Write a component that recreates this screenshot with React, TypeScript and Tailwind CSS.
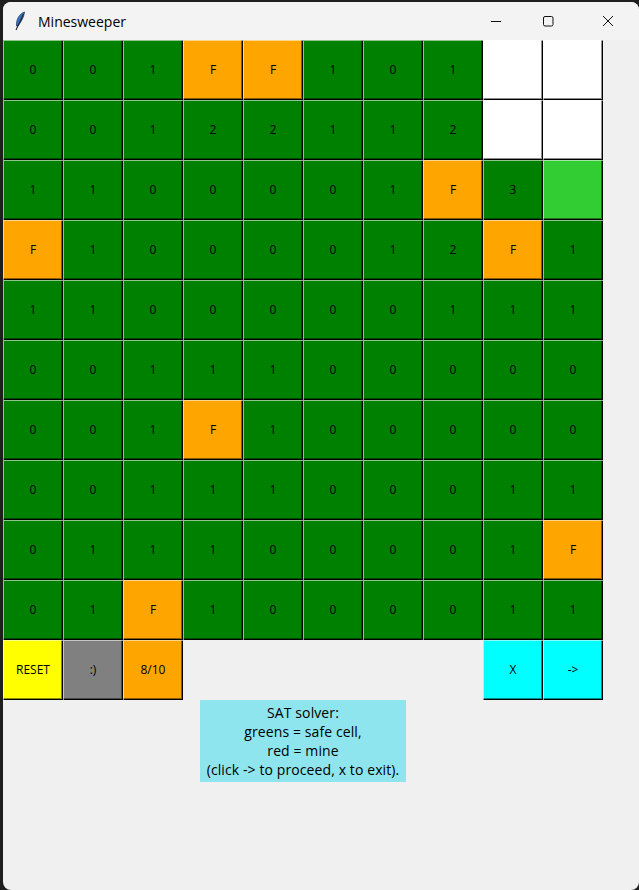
const G = 'bg-[#008000]';
const O = 'bg-[#ffa500]';
const W = 'bg-white';
const L = 'bg-[#32cd32]';

type Cell = { t: string; c: string };

const rows: string[][] = [
  ['0', '0', '1', 'F', 'F', '1', '0', '1', 'W', 'W'],
  ['0', '0', '1', '2', '2', '1', '1', '2', 'W', 'W'],
  ['1', '1', '0', '0', '0', '0', '1', 'F', '3', 'L'],
  ['F', '1', '0', '0', '0', '0', '1', '2', 'F', '1'],
  ['1', '1', '0', '0', '0', '0', '0', '1', '1', '1'],
  ['0', '0', '1', '1', '1', '0', '0', '0', '0', '0'],
  ['0', '0', '1', 'F', '1', '0', '0', '0', '0', '0'],
  ['0', '0', '1', '1', '1', '0', '0', '0', '1', '1'],
  ['0', '1', '1', '1', '0', '0', '0', '0', '1', 'F'],
  ['0', '1', 'F', '1', '0', '0', '0', '0', '1', '1'],
];

function toCell(v: string): Cell {
  if (v === 'F') return { t: 'F', c: O };
  if (v === 'W') return { t: '', c: W };
  if (v === 'L') return { t: '', c: L };
  return { t: v, c: G };
}

function Btn({ text, color }: { text: string; color: string }) {
  return (
    <div
      className={`${color} w-[60px] h-[60px] flex items-center justify-center text-[12px] text-black shadow-[inset_1px_1px_0_rgba(255,255,255,0.55),inset_-1px_-1px_0_#000,inset_-2px_-2px_0_rgba(0,0,0,0.45)]`}
    >
      {text}
    </div>
  );
}

function Feather() {
  return (
    <svg width="12" height="20" viewBox="0 0 12 20">
      <path d="M10.5 1 C5 3 2 9 2.5 15 L4 15 C7 11 10 6 10.5 1 Z" fill="#3b73c4" stroke="#1d3d6e" strokeWidth="0.8" />
      <path d="M9.5 3 L2 19" stroke="#222" strokeWidth="1.1" />
    </svg>
  );
}

export default function App() {
  return (
    <div className="w-[639px] h-[890px] bg-[#1e1e1e] pt-[2px] pl-[3px] overflow-hidden" style={{ fontFamily: '"Open Sans", "Noto Sans", sans-serif' }}>
      <div className="w-[636px] h-[888px] bg-[#f0f0f0] rounded-[8px] overflow-hidden flex flex-col">
        {/* title bar */}
        <div className="h-[38px] bg-[#f3f3f3] flex items-center">
          <div className="ml-[11px] w-[12px] flex items-center">
            <Feather />
          </div>
          <span className="ml-[12px] text-[14px] text-black">Minesweeper</span>
          <div className="ml-auto flex items-center h-full">
            <div className="w-[46px] flex justify-center">
              <svg width="12" height="12" viewBox="0 0 12 12"><path d="M1 6.5 H11" stroke="#111" strokeWidth="1" /></svg>
            </div>
            <div className="w-[6px]" />
            <div className="w-[46px] flex justify-center">
              <svg width="12" height="12" viewBox="0 0 12 12"><rect x="1.5" y="1.5" width="9.5" height="9.5" rx="1.5" fill="none" stroke="#111" strokeWidth="1" /></svg>
            </div>
            <div className="w-[14px]" />
            <div className="w-[46px] flex justify-center mr-[8px]">
              <svg width="12" height="12" viewBox="0 0 12 12"><path d="M1 1 L11 11 M11 1 L1 11" stroke="#111" strokeWidth="1" /></svg>
            </div>
          </div>
        </div>

        {/* board */}
        <div className="w-[600px]">
          <div className="grid grid-cols-10">
            {rows.flat().map((v, i) => {
              const c = toCell(v);
              return <Btn key={i} text={c.t} color={c.c} />;
            })}
          </div>
          <div className="grid grid-cols-10">
            <Btn text="RESET" color="bg-[#ffff00]" />
            <Btn text=":)" color="bg-[#808080]" />
            <Btn text="8/10" color={O} />
            <div className="col-span-5" />
            <Btn text="X" color="bg-[#00ffff]" />
            <Btn text="->" color="bg-[#00ffff]" />
          </div>
          <div className="flex justify-center">
            <div className="bg-[#8ee5ee] w-[206px] h-[82px] flex flex-col items-center justify-center text-[14px] leading-[19px] text-black text-center tracking-[0.1px]">
              <span>SAT solver:</span>
              <span>greens = safe cell,</span>
              <span>red = mine</span>
              <span>(click -&gt; to proceed, x to exit).</span>
            </div>
          </div>
        </div>
      </div>
    </div>
  );
}
